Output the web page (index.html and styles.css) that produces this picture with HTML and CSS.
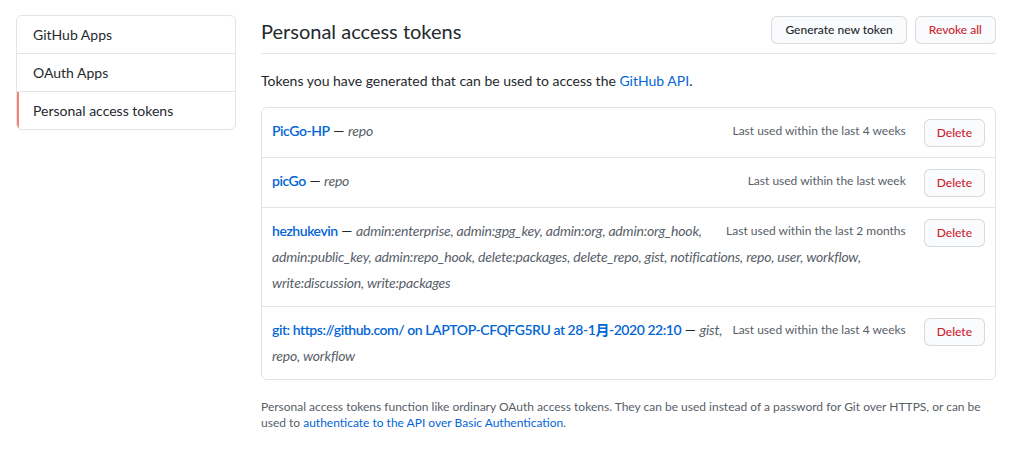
FILE: index.html
```html
<!DOCTYPE html>
<html>
<head>
<meta charset="utf-8">
<link rel="stylesheet" href="styles.css">
</head>
<body>
<div class="page">
  <nav class="menu">
    <a class="menu-item">GitHub Apps</a>
    <a class="menu-item">OAuth Apps</a>
    <a class="menu-item selected">Personal access tokens</a>
  </nav>
  <main class="main">
    <div class="subhead">
      <h2 class="subhead-heading">Personal access tokens</h2>
      <div class="subhead-actions">
        <a class="btn btn-head">Generate new token</a>
        <a class="btn btn-head btn-danger">Revoke all</a>
      </div>
    </div>
    <p class="intro">Tokens you have generated that can be used to access the <a class="link">GitHub API</a>.</p>
    <div class="box">
      <div class="token">
        <a class="btn btn-danger delete">Delete</a>
        <span class="last-used">Last used within the last 4 weeks</span>
        <span class="desc"><a class="token-name">PicGo-HP</a> — <em>repo</em></span>
      </div>
      <div class="token">
        <a class="btn btn-danger delete">Delete</a>
        <span class="last-used">Last used within the last week</span>
        <span class="desc"><a class="token-name">picGo</a> — <em>repo</em></span>
      </div>
      <div class="token">
        <a class="btn btn-danger delete">Delete</a>
        <span class="last-used">Last used within the last 2 months</span>
        <span class="desc"><a class="token-name">hezhukevin</a> — <em>admin:enterprise, admin:gpg_key, admin:org, admin:org_hook, admin:public_key, admin:repo_hook, delete:packages, delete_repo, gist, notifications, repo, user, workflow, write:discussion, write:packages</em></span>
      </div>
      <div class="token">
        <a class="btn btn-danger delete">Delete</a>
        <span class="last-used">Last used within the last 4 weeks</span>
        <span class="desc"><a class="token-name">git: https://github.com/ on LAPTOP-CFQFG5RU at 28-1月-2020 22:10</a> — <em>gist, repo, workflow</em></span>
      </div>
    </div>
    <p class="note">Personal access tokens function like ordinary OAuth access tokens. They can be used instead of a password for Git over HTTPS, or can be used to <a class="link">authenticate to the API over Basic Authentication</a>.</p>
  </main>
</div>
</body>
</html>
```
FILE: styles.css
```css
* { box-sizing: border-box; }
html, body { margin: 0; padding: 0; background: #fff; }
body {
  font-family: "Lato", "Noto Sans CJK SC", sans-serif;
  font-size: 14px;
  line-height: 1.5;
  color: #24292e;
}
.page {
  display: flex;
  align-items: flex-start;
  gap: 25px;
  padding: 15px 34px 0 16px;
}
.menu {
  width: 220px;
  flex: none;
  display: flex;
  flex-direction: column;
  border: 1px solid #e1e4e8;
  border-radius: 6px;
  overflow: hidden;
}
.menu-item {
  display: block;
  padding: 8px 16px;
  line-height: 21px;
  color: #24292e;
  border-bottom: 1px solid #e1e4e8;
}
.menu-item:last-child { border-bottom: 0; }
.menu-item.selected { box-shadow: inset 2px 0 0 #f9826c; }

.main { flex: 1; min-width: 0; }
.subhead {
  display: flex;
  align-items: center;
  padding: 0 0 8px;
  border-bottom: 1px solid #e1e4e8;
}
.subhead-heading {
  flex: 1;
  margin: 0;
  font-size: 20px;
  font-weight: 400;
  line-height: 28px;
  padding-top: 2px;
}
.subhead-actions { display: flex; gap: 8px; }
.btn {
  display: inline-block;
  padding: 3px 12px;
  font-size: 12px;
  line-height: 20px;
  font-weight: 500;
  color: #24292e;
  background: #fafbfc;
  border: 1px solid rgba(27, 31, 35, 0.15);
  border-radius: 6px;
  white-space: nowrap;
}
.btn-head { padding: 3px 13px; }
.btn-danger { color: #cb2431; }
.link { color: #0366d6; }
.intro { margin: 16px 0; line-height: 21px; }

.box {
  border: 1px solid #e1e4e8;
  border-radius: 6px;
}
.token {
  display: flow-root;
  padding: 10px 10px;
  line-height: 26px;
  border-top: 1px solid #e1e4e8;
}
.token:first-child { border-top: 0; }
.delete {
  float: right;
  margin-top: 1px;
  margin-left: 4px;
}
.last-used {
  float: right;
  font-size: 12px;
  line-height: 26px;
  height: 26px;
  color: #586069;
  margin-right: 14px;
  margin-left: 6px;
}
.token-name { color: #0366d6; font-weight: 600; letter-spacing: -0.45px; }
.desc em { color: #586069; letter-spacing: -0.2px; }

.note {
  margin: 19px 0 0;
  font-size: 12px;
  line-height: 16px;
  color: #586069;
}
```
